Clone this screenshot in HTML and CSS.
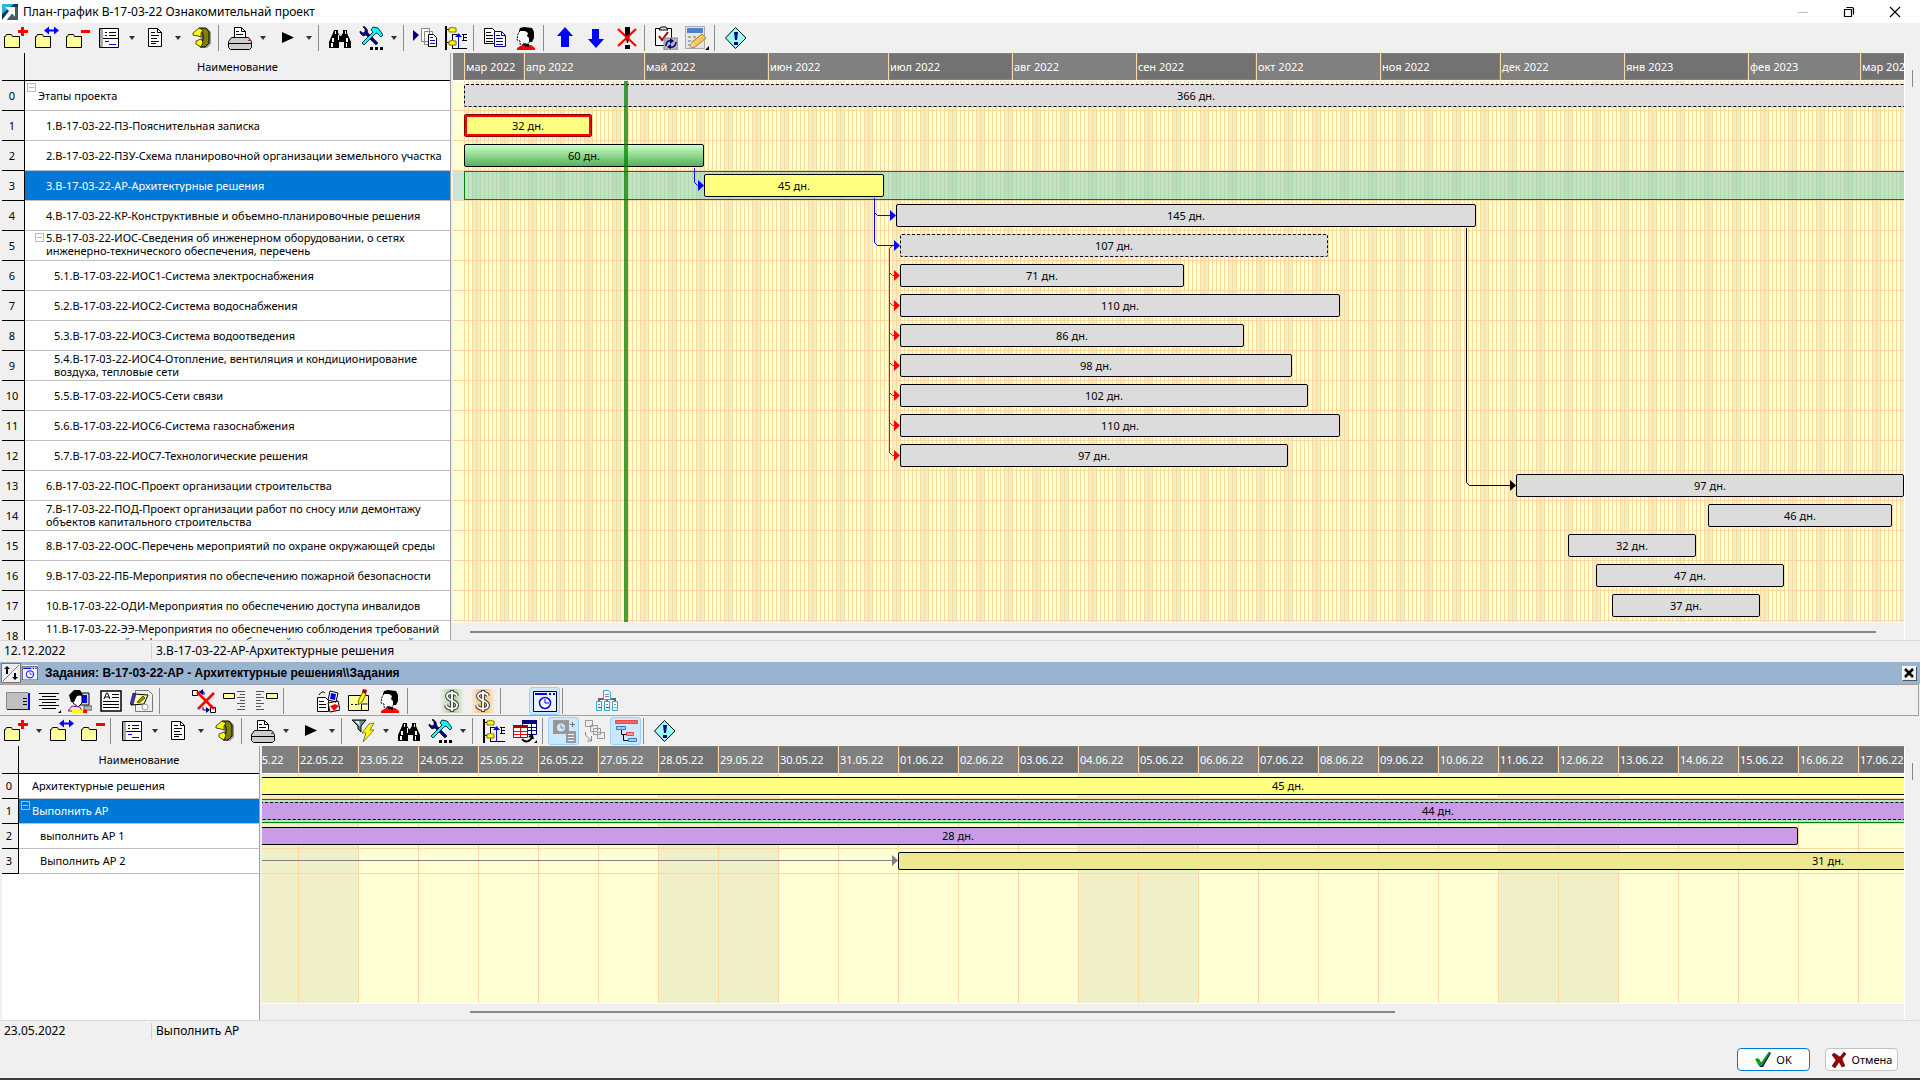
FILE: index.html
```html
<!DOCTYPE html>
<html lang="ru">
<head>
<meta charset="utf-8">
<meta name="viewport" content="width=device-width, initial-scale=1">
<title>План-график В-17-03-22 Ознакомительнай проект</title>
<link rel="stylesheet" href="styles.css">
</head>
<body>
<svg class="sprite" aria-hidden="true">
  <symbol id="i-folder" viewBox="0 0 24 24"><path d="M.5 10.500V21.500H15.500V10.500H8.500L7.500 8.500H2.500L1.500 10.500Z" fill="#ff9" stroke="#000"/></symbol>
  <symbol id="i-add" viewBox="0 0 24 24"><use href="#i-folder"/><path d="M14 4h3V1h3v3h4v3h-4v3h-3V7h-3z" fill="#f00"/></symbol>
  <symbol id="i-move" viewBox="0 0 24 24"><use href="#i-folder"/><path d="M9 4.500l5-4v3h5v-3l5 4-5 4v-3h-5v3z" fill="#00f"/></symbol>
  <symbol id="i-remove" viewBox="0 0 24 24"><use href="#i-folder"/><path d="M15 4h9v3h-9z" fill="#f00"/></symbol>
  <symbol id="i-list" viewBox="0 0 24 24"><path d="M2.500 2.500h19v19h-19z" fill="#fff" stroke="#000"/><path d="M3 3h3v18H3z" fill="#aaa"/><path d="M8 6h2v1H8zM12 6h7v1h-7zM8 9h2v1H8zM12 9h7v1h-7zM6 12h15v1H6z"/><path d="M8 15h4v1H8zM12 18h7v1h-7z" fill="#00f"/></symbol>
  <symbol id="i-doc" viewBox="0 0 24 24"><path d="M5.500 2.500h9l4 4v14h-13z" fill="#fff" stroke="#000"/><path d="M14.500 3v3.500h4M8 6.500h4M8 9.500h8M8 12.500h6M8 15.500h8M8 17.500h5" fill="none" stroke="#000"/></symbol>
  <symbol id="i-book" viewBox="0 0 24 24"><path d="M12 2h6l4 4v12l-4 4h-6z" fill="#999"/><path d="M10 2h7l3 4v11l-4 4h-5l3-7V8z" fill="#808000" stroke="#000"/><path d="M4 7l6-5 4 2-2 3v4l-3-1-5-1zM7 15l5-2 2 3-2 5-5-3z" fill="#ff0" stroke="#000" stroke-width=".7"/></symbol>
  <symbol id="i-print" viewBox="0 0 24 24"><path d="M6.500 12V1.500h7l4 4V12" fill="#fff" stroke="#000"/><path d="M13.500 2v3.500h4M8 5.500h3M8 8.500h7" fill="none" stroke="#000"/><path d="M3.500 11.500h17l3 4v6l-2 2h-19l-2-2v-6z" fill="#ccc" stroke="#000"/><path d="M1 17.500h22" stroke="#000"/><path d="M20 14h2v1h-2z" fill="#f00"/></symbol>
  <symbol id="i-play" viewBox="0 0 24 24"><path d="M8 6l12 5.500L8 17z"/></symbol>
  <symbol id="i-find" viewBox="0 0 24 24"><path d="M6 4h4v3l2 3h1l2-3V4h4v3l4 9v6h-7v-6h-5v6H1v-6l4-9z"/><path d="M7 5h1v3H7zM17 5h1v3h-1zM4 12h2v4H4zM18 12h2v4h-2zM3 17h2v4H3zM18 17h1v4h-1zM10 9h1v5h-1z" fill="#fff"/></symbol>
  <symbol id="i-tools" viewBox="0 0 24 24"><path d="M4 1l2 2v3L4 7 1 5v2l3 3 3-1 10 10 2-2L9 7 8 3 5 0z" fill="#000080" stroke="#000" stroke-width=".6"/><path d="M14 1l5 1 3 4 2 3-2 2-4-4-2 1L5 19l-2-2L14 6l-2-2z" fill="#0ff" stroke="#000" stroke-width=".8"/><path d="M11 21h3v3h-3zM16 21h3v3h-3zM21 21h3v3h-3z"/></symbol>
  <symbol id="i-expand" viewBox="0 0 24 24"><path d="M0 4l6 5-6 6z" fill="#000080"/><path d="M8.500 2.500h8v13h-8zM11.500 5.500h8v13h-8z" fill="#fff" stroke="#888"/><path d="M15.500 8.500h5l3 3v9h-8z" fill="#fff" stroke="#000"/><path d="M17 11.500h3M17 14.500h5M17 17.500h5" stroke="#00f"/></symbol>
  <symbol id="i-tree" viewBox="0 0 24 24"><path d="M2 0v24" stroke="#000" stroke-width="2"/><path d="M3 3.500h3M3 16.500h3M8 22.500h15M23 8.500h-5M19.500 8v6M23 11.500h-3M23 14.500h-5M8.500 8v7M8.500 22v-3M8 8.500h5" stroke="#000" fill="none"/><path d="M5 2h2l1-1 2 1h2v4H5zM5 15h2l1-1 2 1h2v4H5z" fill="#ff0" stroke="#770"/><path d="M14 22V11h-3l3.500-4L18 11h-3v11z" fill="#00f"/></symbol>
  <symbol id="i-copy" viewBox="0 0 24 24"><path d="M1.500 2.500h8l4 4v11h-12z" fill="#fff" stroke="#000"/><path d="M3 6.500h5M3 9.500h7M3 12.500h7M3 15.500h7" stroke="#000"/><path d="M11.500 5.500h7l4 4v11h-11z" fill="#fff" stroke="#000080"/><path d="M18.500 6v3.500h4M13 9.500h4M13 12.500h7M13 15.500h7M13 18.500h7" fill="none" stroke="#000080"/></symbol>
  <symbol id="i-person" viewBox="0 0 24 24"><path d="M7 3h7l4 4-2 8-3 5-7-2v-3l-3-1 1-6z" fill="#fff" stroke="#000" stroke-dasharray="2 1"/><path d="M6 2l4-1 8 1 2 4v6l-2 4h-3v-4l-2-2 1-3-3-2H5z"/><path d="M3 22l5-3h9l4 3v2H3z" fill="#f00"/><path d="M9 17l6 1v3l-5-1z"/></symbol>
  <symbol id="i-up" viewBox="0 0 24 24"><path d="M12 1l8 9h-4v11H8V10H4z" fill="#00f"/></symbol>
  <symbol id="i-down" viewBox="0 0 24 24"><path d="M12 22l-8-9h4V3h7v10h5z" fill="#00f"/></symbol>
  <symbol id="i-stop" viewBox="0 0 24 24"><path d="M10 1h5v8l-2 8h-1l-2-8zM10 19h5v4h-5z"/><path d="M3 3l18 17M21 3L3 20" stroke="#f00" stroke-width="2.200"/></symbol>
  <symbol id="i-check" viewBox="0 0 24 24"><path d="M1.500 2.500h16v17h-16z" fill="#fff" stroke="#000"/><path d="M5 4l2-3h5l2 3z" fill="#ddd" stroke="#000"/><path d="M5 10l3 4 6-8" fill="none" stroke="#a00000" stroke-width="2"/><path d="M10 12h14v12H10z" fill="#b4b4b4" stroke="#888"/><path d="M12 20c0-4 2-6 6-5M22 16c0 4-3 6-7 5" fill="none" stroke="#000080" stroke-width="1.500"/><path d="M16 12l4 3-4 3zM17 18v5l-4-2z" fill="#000080"/></symbol>
  <symbol id="i-calc" viewBox="0 0 24 24"><path d="M.5.5h19v22H.500z" fill="#e6e6e6" stroke="#aaa"/><path d="M2 2h16v5H2z" fill="#5080c8"/><path d="M3 10h3v2H3zM8 10h3v2H8zM13 10h3v2h-3zM3 14h3v2H3zM8 14h3v2H8zM3 18h3v2H3z" fill="#aaa"/><path d="M5 22l2-6L17 8l4 4-11 9z" fill="#f8c860" stroke="#b07820"/><path d="M5 22l2-6 3 4z" fill="#e8d8b8"/><path d="M24 20v4h-4z"/></symbol>
  <symbol id="i-info" viewBox="0 0 24 24"><path d="M11.500 1.500L22 12 11.500 22.500 1.500 12z" fill="#9ff" stroke="#000"/><path d="M10 6h4l-1 8h-2zM10 16h4v3h-4z" fill="#000080"/></symbol>
  <symbol id="i-panel" viewBox="0 0 24 24"><path d="M1 4h23v17H1z" fill="#00f"/><path d="M0 3h22v17H0z" fill="#c0c0c0"/><path d="M.5 20V3.500H22" fill="none" stroke="#888"/><path d="M17 9.500h4M17 12.500h4M17 15.500h4" stroke="#000"/></symbol>
  <symbol id="i-lines" viewBox="0 0 24 24"><path d="M2 4.500h20M5 7.500h14M2 10.500h20M5 13.500h14M2 16.500h20M5 19.500h14" stroke="#000"/><path d="M24 21v3h-3z"/></symbol>
  <symbol id="i-user" viewBox="0 0 24 24"><path d="M12 4h9v12h-9z" fill="#ddd" stroke="#000"/><path d="M14 6h5v8h-5z" fill="#00f"/><path d="M16 17h8v4h-8z" fill="#bbb" stroke="#555"/><path d="M5 6l5-2 4 3v7l-4 4-5-4z" fill="#fff" stroke="#000"/><path d="M1 6l5-5h6l3 5-6 1-3 6H3z"/><path d="M0 22l4-5 8 1 2 4z" fill="#e8e8e8" stroke="#909"/><path d="M4 21h12v3H4z" fill="#ff0"/><path d="M15 21h4v3h-4z" fill="#f00"/></symbol>
  <symbol id="i-article" viewBox="0 0 24 24"><path d="M2 2h20v20H2z" fill="#fff" stroke="#000" stroke-width="1.500"/><path d="M5 10l2.500-6h1L11 10M6 8h4M13 5.500h7M13 8.500h7M4 12.500h16M4 15.500h16M4 18.500h16" fill="none" stroke="#000"/></symbol>
  <symbol id="i-plan" viewBox="0 0 24 24"><path d="M5.500 1.500h13l4 4v17h-17z" fill="#eee" stroke="#777"/><path d="M4 5l14 1-4 9-13 1z" fill="#ff9" stroke="#000"/><path d="M3 4l3 1-3 11-3-1z" fill="#33c" stroke="#000" stroke-width=".5"/><circle cx="15" cy="18" r="3" fill="#fff" stroke="#999"/><path d="M7 13l6-6 2 2-6 5z" fill="#990" stroke="#550"/></symbol>
  <symbol id="i-unlink" viewBox="0 0 24 24"><path d="M.5 1.500h5v5h-5zM18.500 18.500h5v5h-5z" fill="#fff" stroke="#000"/><path d="M7 3h5v3M11 18v3h6" fill="none" stroke="#000080"/><path d="M11 0v6L7 3zM14 18v6l4-3z" fill="#000080"/><path d="M5 3l17 17M22 4L6 20" stroke="#f00" stroke-width="2.500"/></symbol>
  <symbol id="i-left" viewBox="0 0 24 24"><path d="M.5 4.500h11v5H.500z" fill="#ff9" stroke="#000"/><path d="M14 2.500h8M17 5.500h5M14 8.500h8M17 11.500h5M14 14.500h8M17 17.500h5M14 20.500h8" stroke="#555"/></symbol>
  <symbol id="i-right" viewBox="0 0 24 24"><path d="M12.500 4.500h11v5h-11z" fill="#ff9" stroke="#000"/><path d="M2 2.500h8M2 5.500h5M2 8.500h8M2 11.500h5M2 14.500h8M2 17.500h5M2 20.500h8" stroke="#555"/></symbol>
  <symbol id="i-cards" viewBox="0 0 24 24"><path d="M1.500 8.500h8l3 3v11h-11z" fill="#fff" stroke="#000"/><path d="M3 12.500h5M3 15.500h7M3 18.500h7M3 6q3-5 6-2" fill="none" stroke="#000"/><path d="M14 2l8 2-2 9-8-2zM12 14l10-2 2 9-10 2z" fill="#fff" stroke="#000"/><path d="M15 4l5 1-1 6-5-1z" fill="#00f"/><path d="M14 17l3-1 2-1 4 2-5 5z" fill="#f00"/></symbol>
  <symbol id="i-note" viewBox="0 0 24 24"><path d="M1.500 6.500h20v15h-20z" fill="#ff9" stroke="#000"/><path d="M4 15h2v1H4zM8 15h2v1H8z"/><path d="M14.500 21v-6h6" fill="#fff" stroke="#000"/><path d="M11 16l1-6 4-7 3 2-4 8z" fill="#ff0" stroke="#660"/><path d="M15 3l1-3 4 1-1 4z" fill="#a00"/></symbol>
  <symbol id="i-dollar" viewBox="0 0 24 24"><path d="M17 7c-1-4-10-4-10 0 0 5 10 4 10 9 0 5-10 5-11 0M12 1v22" fill="none" stroke="#444" stroke-width="4"/><path d="M17 7c-1-4-10-4-10 0 0 5 10 4 10 9 0 5-10 5-11 0M12 2v20" fill="none" stroke="#fff" stroke-width="1.800"/></symbol>
  <symbol id="i-clock" viewBox="0 0 24 24"><path d="M.5 2.500h23v20H.500z" fill="#e8f4ff" stroke="#000"/><path d="M2 4h12v2H2zM16 4h2v2h-2zM20 4h2v2h-2z" fill="#00f"/><circle cx="12" cy="14" r="5.500" fill="#fff" stroke="#00f" stroke-width="1.500"/><path d="M12 10v4h4" fill="none" stroke="#00f"/></symbol>
  <symbol id="i-org" viewBox="0 0 24 24"><path d="M12 9v4M4 13v-3h16v3" fill="none" stroke="#666" stroke-width="2"/><path d="M8.500 1.500h5l2 2v7h-7zM1.500 12.500h5v9h-5zM9.500 12.500h5v9h-5zM17.500 12.500h5v9h-5z" fill="#f4fbff" stroke="#29abd8"/><path d="M10 5.500h4M10 7.500h4M3 15.500h2M11 15.500h2M19 15.500h2" stroke="#88a"/><path d="M3 18h3v1H3z" fill="#f00"/><path d="M11 18h3v1h-3z" fill="#080"/><path d="M19 18h3v1h-3z" fill="#f90"/></symbol>
  <symbol id="i-filter" viewBox="0 0 24 24"><path d="M1 1h14l-5 6v6l-3-3V7z" fill="#5f8f8f" stroke="#000"/><path d="M4 2h4l1 5z" fill="#fff"/><path d="M18 5l5-1-4 7h4L12 23l3-9h-4z" fill="#ff0" stroke="#776"/></symbol>
  <symbol id="i-tables" viewBox="0 0 24 24"><path d="M9.500 1.500h14v14h-14z" fill="#fff" stroke="#000080"/><path d="M9 1h15v4H9z" fill="#000080"/><path d="M10 8.500h13M10 11.500h13M18.500 5v10" stroke="#000080"/><path d="M.5 6.500h14v12h-14z" fill="#fff" stroke="#a00"/><path d="M0 6h15v3H0z" fill="#a00"/><path d="M1 12.500h13M1 15.500h13M7.500 9v9" stroke="#f00"/><path d="M9 20c3 4 8 3 10-2M16 18l3-2 1 4" fill="none" stroke="#000" stroke-width="2"/><path d="M24 21v3h-3z"/></symbol>
  <symbol id="i-photo" viewBox="0 0 24 24"><path d="M1 1h16v14H1zM14 12h10v12H14z" fill="#999"/><circle cx="9" cy="8.500" r="4" fill="#cce8ff"/><path d="M9 6v3h3M3 3h3" fill="none" stroke="#888"/><path d="M16 15.500h6M16 18.500h6M16 21.500h6" stroke="#e8f4ff"/><path d="M18 5.500h5M20.500 3v5" stroke="#777"/></symbol>
  <symbol id="i-boxes" viewBox="0 0 24 24"><path d="M2.500 1.500h7v6h-7zM7.500 6.500h7v6h-7zM10.500 9.500h7v6h-7zM14.500 13.500h7v6h-7z" fill="#eee" stroke="#999"/><path d="M2.500 13v3l6 6m0-5v5H4" fill="none" stroke="#888"/></symbol>
  <symbol id="i-gantt" viewBox="0 0 24 24"><path d="M1.500 1.500h22v3h-22z" fill="#f66" stroke="#e44"/><path d="M2.500 7.500h9v3h-9z" fill="#9cf" stroke="#47b"/><path d="M12.500 13.500h7v3h-7z" fill="#f99" stroke="#e44"/><path d="M14.500 19.500h8v3h-8z" fill="#9cf" stroke="#47b"/><path d="M7.500 11v4.500H12M9.500 16v5.500H14" fill="none" stroke="#000"/></symbol>
</svg>

<header class="titlebar">
  <svg class="logo" viewBox="0 0 16 16" aria-hidden="true"><path d="M0 0h16v16H0z" fill="#135"/><path d="M0 0h12L0 10z" fill="#27b4e8"/><path d="M3 3h10v10l-3-3-5 6H0l7-9z" fill="#fff"/><path d="M13 3v10l-3-3-5 6h11V3z" fill="#445a66"/></svg>
  <h1 class="title">План-график В-17-03-22 Ознакомительнай проект</h1>
  <button class="win" aria-label="Свернуть"><svg viewBox="0 0 12 12"><path d="M1 6.500h10" stroke="#bbb"/></svg></button>
  <button class="win" aria-label="Восстановить"><svg viewBox="0 0 12 12"><path d="M1.500 3.500h7v7h-7zM3.500 1.500h6l1 1v6" fill="none" stroke="#000" stroke-width="1.200"/></svg></button>
  <button class="win" aria-label="Закрыть"><svg viewBox="0 0 12 12"><path d="M1 1l10 10M11 1L1 11" stroke="#000" stroke-width="1.200"/></svg></button>
</header>

<nav class="toolbar" aria-label="Этапы">
  <button class="tool" aria-label="Добавить"><svg><use href="#i-add"/></svg></button>
  <button class="tool" aria-label="Переместить"><svg><use href="#i-move"/></svg></button>
  <button class="tool" aria-label="Удалить"><svg><use href="#i-remove"/></svg></button>
  <button class="tool" aria-label="Вид"><svg><use href="#i-list"/></svg></button>
  <button class="drop" aria-label="Варианты вида"></button>
  <button class="tool" aria-label="Документ"><svg><use href="#i-doc"/></svg></button>
  <button class="drop" aria-label="Варианты документа"></button>
  <button class="tool" aria-label="Справочник"><svg><use href="#i-book"/></svg></button>
  <span class="sep"></span>
  <button class="tool" aria-label="Печать"><svg><use href="#i-print"/></svg></button>
  <button class="drop" aria-label="Варианты печати"></button>
  <button class="tool" aria-label="Запуск"><svg><use href="#i-play"/></svg></button>
  <button class="drop" aria-label="Варианты запуска"></button>
  <span class="sep"></span>
  <button class="tool" aria-label="Поиск"><svg><use href="#i-find"/></svg></button>
  <button class="tool" aria-label="Сервис"><svg><use href="#i-tools"/></svg></button>
  <button class="drop" aria-label="Варианты сервиса"></button>
  <span class="sep"></span>
  <button class="tool" aria-label="Развернуть"><svg><use href="#i-expand"/></svg></button>
  <button class="tool" aria-label="Дерево"><svg><use href="#i-tree"/></svg></button>
  <span class="sep"></span>
  <button class="tool" aria-label="Копировать"><svg><use href="#i-copy"/></svg></button>
  <button class="tool" aria-label="Исполнитель"><svg><use href="#i-person"/></svg></button>
  <span class="sep"></span>
  <button class="tool" aria-label="Вверх"><svg><use href="#i-up"/></svg></button>
  <button class="tool" aria-label="Вниз"><svg><use href="#i-down"/></svg></button>
  <button class="tool" aria-label="Снять важность"><svg><use href="#i-stop"/></svg></button>
  <span class="sep"></span>
  <button class="tool" aria-label="Обновить задания"><svg><use href="#i-check"/></svg></button>
  <button class="tool" aria-label="Расчёт"><svg><use href="#i-calc"/></svg></button>
  <span class="sep"></span>
  <button class="tool" aria-label="Информация"><svg><use href="#i-info"/></svg></button>
</nav>

<main class="gantt stages">
  <div class="names">
    <table>
      <thead><tr><th class="num" aria-label="Номер"></th><th>Наименование</th></tr></thead>
      <tbody>
        <tr><th>0</th><td><button class="toggle" aria-label="Свернуть ветвь"></button><div class="name">Этапы проекта</div></td></tr>
        <tr><th>1</th><td class="l1"><div class="name">1.В-17-03-22-ПЗ-Пояснительная записка</div></td></tr>
        <tr><th>2</th><td class="l1"><div class="name">2.В-17-03-22-ПЗУ-Схема планировочной организации земельного участка</div></td></tr>
        <tr class="current"><th>3</th><td class="l1"><div class="name">3.В-17-03-22-АР-Архитектурные решения</div></td></tr>
        <tr><th>4</th><td class="l1"><div class="name">4.В-17-03-22-КР-Конструктивные и объемно-планировочные решения</div></td></tr>
        <tr><th>5</th><td class="l1"><button class="toggle" aria-label="Свернуть ветвь"></button><div class="name">5.В-17-03-22-ИОС-Сведения об инженерном оборудовании, о сетях<br>инженерно-технического обеспечения, перечень<br>инженерно-технических мероприятий</div></td></tr>
        <tr><th>6</th><td class="l2"><div class="name">5.1.В-17-03-22-ИОС1-Система электроснабжения</div></td></tr>
        <tr><th>7</th><td class="l2"><div class="name">5.2.В-17-03-22-ИОС2-Система водоснабжения</div></td></tr>
        <tr><th>8</th><td class="l2"><div class="name">5.3.В-17-03-22-ИОС3-Система водоотведения</div></td></tr>
        <tr><th>9</th><td class="l2"><div class="name">5.4.В-17-03-22-ИОС4-Отопление, вентиляция и кондиционирование<br>воздуха, тепловые сети</div></td></tr>
        <tr><th>10</th><td class="l2"><div class="name">5.5.В-17-03-22-ИОС5-Сети связи</div></td></tr>
        <tr><th>11</th><td class="l2"><div class="name">5.6.В-17-03-22-ИОС6-Система газоснабжения</div></td></tr>
        <tr><th>12</th><td class="l2"><div class="name">5.7.В-17-03-22-ИОС7-Технологические решения</div></td></tr>
        <tr><th>13</th><td class="l1"><div class="name">6.В-17-03-22-ПОС-Проект организации строительства</div></td></tr>
        <tr><th>14</th><td class="l1"><div class="name">7.В-17-03-22-ПОД-Проект организации работ по сносу или демонтажу<br>объектов капитального строительства</div></td></tr>
        <tr><th>15</th><td class="l1"><div class="name">8.В-17-03-22-ООС-Перечень мероприятий по охране окружающей среды</div></td></tr>
        <tr><th>16</th><td class="l1"><div class="name">9.В-17-03-22-ПБ-Мероприятия по обеспечению пожарной безопасности</div></td></tr>
        <tr><th>17</th><td class="l1"><div class="name">10.В-17-03-22-ОДИ-Мероприятия по обеспечению доступа инвалидов</div></td></tr>
        <tr><th>18</th><td class="l1"><div class="name">11.В-17-03-22-ЭЭ-Мероприятия по обеспечению соблюдения требований<br>энергетической эффективности и требований оснащенности зданий</div></td></tr>
      </tbody>
    </table>
  </div>
  <div class="chart">
    <div class="scale">
      <span style="--days:15">мар 2022</span>
      <span style="--days:30">апр 2022</span>
      <span style="--days:31">май 2022</span>
      <span style="--days:30">июн 2022</span>
      <span style="--days:31">июл 2022</span>
      <span style="--days:31">авг 2022</span>
      <span style="--days:30">сен 2022</span>
      <span style="--days:31">окт 2022</span>
      <span style="--days:30">ноя 2022</span>
      <span style="--days:31">дек 2022</span>
      <span style="--days:31">янв 2023</span>
      <span style="--days:28">фев 2023</span>
      <span style="--days:31">мар 2023</span>
    </div>
    <div class="plot">
      <div class="row"><div class="bar group" style="--start:0;--days:366">366 дн.</div></div>
      <div class="row"><div class="bar late" style="--start:0;--days:32">32 дн.</div></div>
      <div class="row"><div class="bar done" style="--start:0;--days:60">60 дн.</div></div>
      <div class="row current"><div class="bar active" style="--start:60;--days:45">45 дн.</div></div>
      <div class="row"><div class="bar" style="--start:108;--days:145">145 дн.</div></div>
      <div class="row"><div class="bar group" style="--start:109;--days:107">107 дн.</div></div>
      <div class="row"><div class="bar" style="--start:109;--days:71">71 дн.</div></div>
      <div class="row"><div class="bar" style="--start:109;--days:110">110 дн.</div></div>
      <div class="row"><div class="bar" style="--start:109;--days:86">86 дн.</div></div>
      <div class="row"><div class="bar" style="--start:109;--days:98">98 дн.</div></div>
      <div class="row"><div class="bar" style="--start:109;--days:102">102 дн.</div></div>
      <div class="row"><div class="bar" style="--start:109;--days:110">110 дн.</div></div>
      <div class="row"><div class="bar" style="--start:109;--days:97">97 дн.</div></div>
      <div class="row"><div class="bar" style="--start:263;--days:97">97 дн.</div></div>
      <div class="row"><div class="bar" style="--start:311;--days:46">46 дн.</div></div>
      <div class="row"><div class="bar" style="--start:276;--days:32">32 дн.</div></div>
      <div class="row"><div class="bar" style="--start:283;--days:47">47 дн.</div></div>
      <div class="row"><div class="bar" style="--start:287;--days:37">37 дн.</div></div>
      <svg class="links" aria-hidden="true">
        <g fill="none">
          <path stroke="#f00" d="M441 164.500h-1.500l-3 3V371.500l3 3H441M436.500 191.500l3 3H441M436.500 221.500l3 3H441M436.500 251.500l3 3H441M436.500 281.500l3 3H441M436.500 311.500l3 3H441M436.500 341.500l3 3H441"/>
          <path stroke="#00f" d="M241.500 87V101.500l3 3M421.500 117V161.500l3 3H441M421.500 131.500l3 3H437"/>
          <path stroke="#000" d="M1013.500 147V401.500l3 3H1057"/>
        </g>
        <path fill="#f00" d="M441 189l6 5.500-6 5.500zM441 219l6 5.500-6 5.500zM441 249l6 5.500-6 5.500zM441 279l6 5.500-6 5.500zM441 309l6 5.500-6 5.500zM441 339l6 5.500-6 5.500zM441 369l6 5.500-6 5.500z"/>
        <path fill="#00f" d="M245 99l6 5.500-6 5.500zM437 129l6 5.500-6 5.500zM441 159l6 5.500-6 5.500z"/>
        <path d="M1057 399l6 5.500-6 5.500z"/>
      </svg>
      <div class="today"></div>
    </div>
    <div class="hscroll"><div class="thumb"></div></div>
  </div>
  <div class="vscroll"><div class="thumb"></div></div>
</main>
<div class="status"><span class="date">12.12.2022</span><span>3.В-17-03-22-АР-Архитектурные решения</span></div>

<section class="dock">
  <header class="dockbar">
    <button class="swap" aria-label="Поменять местами"><svg viewBox="0 0 18 18"><path d="M1 17L17 1" stroke="#777"/><path d="M5 2L2 5h2v5h2V5h2zM13 16l-3-3h2V9h2v4h2z"/></svg></button>
    <svg class="dockicon" viewBox="0 0 24 24"><use href="#i-clock"/></svg>
    <h2>Задания: В-17-03-22-АР - Архитектурные решения\\Задания</h2>
    <button class="shut" aria-label="Закрыть панель"><svg viewBox="0 0 12 12"><path d="M2 2l8 8M10 2l-8 8" stroke="#000" stroke-width="2.500"/></svg></button>
  </header>
  <nav class="toolbar framed" aria-label="Задания">
    <button class="tool" aria-label="Карточка"><svg><use href="#i-panel"/></svg></button>
    <button class="tool" aria-label="Строки"><svg><use href="#i-lines"/></svg></button>
    <button class="tool" aria-label="Сотрудник"><svg><use href="#i-user"/></svg></button>
    <button class="tool" aria-label="Описание"><svg><use href="#i-article"/></svg></button>
    <button class="tool" aria-label="Чертёж"><svg><use href="#i-plan"/></svg></button>
    <span class="sep far"></span>
    <button class="tool" aria-label="Убрать связь"><svg><use href="#i-unlink"/></svg></button>
    <button class="tool" aria-label="Влево"><svg><use href="#i-left"/></svg></button>
    <button class="tool" aria-label="Вправо"><svg><use href="#i-right"/></svg></button>
    <span class="sep far"></span>
    <button class="tool" aria-label="Карты"><svg><use href="#i-cards"/></svg></button>
    <button class="tool" aria-label="Заметка"><svg><use href="#i-note"/></svg></button>
    <button class="tool" aria-label="Исполнитель"><svg><use href="#i-person"/></svg></button>
    <span class="sep far"></span>
    <button class="tool" aria-label="Доход"><svg class="green"><use href="#i-dollar"/></svg></button>
    <button class="tool" aria-label="Расход"><svg class="orange"><use href="#i-dollar"/></svg></button>
    <span class="sep far"></span>
    <button class="tool on" aria-label="График"><svg><use href="#i-clock"/></svg></button>
    <span class="sep far"></span>
    <button class="tool" aria-label="Структура"><svg><use href="#i-org"/></svg></button>
  </nav>
  <nav class="toolbar" aria-label="График заданий">
    <button class="tool" aria-label="Добавить"><svg><use href="#i-add"/></svg></button>
    <button class="drop" aria-label="Варианты добавления"></button>
    <button class="tool" aria-label="Переместить"><svg><use href="#i-move"/></svg></button>
    <button class="tool" aria-label="Удалить"><svg><use href="#i-remove"/></svg></button>
    <span class="sep"></span>
    <button class="tool" aria-label="Вид"><svg><use href="#i-list"/></svg></button>
    <button class="drop" aria-label="Варианты вида"></button>
    <button class="tool" aria-label="Документ"><svg><use href="#i-doc"/></svg></button>
    <button class="drop" aria-label="Варианты документа"></button>
    <button class="tool" aria-label="Справочник"><svg><use href="#i-book"/></svg></button>
    <span class="sep"></span>
    <button class="tool" aria-label="Печать"><svg><use href="#i-print"/></svg></button>
    <button class="drop" aria-label="Варианты печати"></button>
    <button class="tool" aria-label="Запуск"><svg><use href="#i-play"/></svg></button>
    <button class="drop" aria-label="Варианты запуска"></button>
    <span class="sep"></span>
    <button class="tool" aria-label="Фильтр"><svg><use href="#i-filter"/></svg></button>
    <button class="drop" aria-label="Варианты фильтра"></button>
    <button class="tool" aria-label="Поиск"><svg><use href="#i-find"/></svg></button>
    <button class="tool" aria-label="Сервис"><svg><use href="#i-tools"/></svg></button>
    <button class="drop" aria-label="Варианты сервиса"></button>
    <span class="sep"></span>
    <button class="tool" aria-label="Дерево"><svg><use href="#i-tree"/></svg></button>
    <button class="tool" aria-label="Таблицы"><svg><use href="#i-tables"/></svg></button>
    <span class="sep"></span>
    <button class="tool on" aria-label="Подробности"><svg><use href="#i-photo"/></svg></button>
    <button class="tool" aria-label="Каскад"><svg><use href="#i-boxes"/></svg></button>
    <button class="tool on" aria-label="Диаграмма"><svg><use href="#i-gantt"/></svg></button>
    <span class="sep"></span>
    <button class="tool" aria-label="Информация"><svg><use href="#i-info"/></svg></button>
  </nav>
</section>

<section class="gantt tasks">
  <div class="names">
    <table>
      <thead><tr><th class="num" aria-label="Номер"></th><th>Наименование</th></tr></thead>
      <tbody>
        <tr><th>0</th><td><div class="name">Архитектурные решения</div></td></tr>
        <tr class="current"><th>1</th><td><button class="toggle" aria-label="Свернуть ветвь"></button><div class="name">Выполнить АР</div></td></tr>
        <tr><th>2</th><td class="l1"><div class="name">выполнить АР 1</div></td></tr>
        <tr><th>3</th><td class="l1"><div class="name">Выполнить АР 2</div></td></tr>
      </tbody>
    </table>
  </div>
  <div class="chart">
    <div class="scale">
      <span>21.05.22</span><span>22.05.22</span><span>23.05.22</span><span>24.05.22</span><span>25.05.22</span><span>26.05.22</span><span>27.05.22</span><span>28.05.22</span><span>29.05.22</span><span>30.05.22</span><span>31.05.22</span><span>01.06.22</span><span>02.06.22</span><span>03.06.22</span><span>04.06.22</span><span>05.06.22</span><span>06.06.22</span><span>07.06.22</span><span>08.06.22</span><span>09.06.22</span><span>10.06.22</span><span>11.06.22</span><span>12.06.22</span><span>13.06.22</span><span>14.06.22</span><span>15.06.22</span><span>16.06.22</span><span>17.06.22</span>
    </div>
    <div class="plot">
      <div class="row"><div class="bar active" style="--start:-6;--days:45">45 дн.</div></div>
      <div class="row current"><div class="bar work group" style="--start:-3;--days:44">44 дн.</div></div>
      <div class="row"><div class="bar work" style="--start:-3;--days:28">28 дн.</div></div>
      <div class="row"><div class="bar wait" style="--start:10;--days:31">31 дн.</div></div>
      <svg class="links" aria-hidden="true"><path d="M0 86.500h631" stroke="#808080"/><path d="M630 81l6 5.500-6 5.500z" fill="#808080"/></svg>
    </div>
    <div class="hscroll"><div class="thumb"></div></div>
  </div>
  <div class="vscroll"><div class="thumb"></div></div>
</section>
<div class="status"><span class="date">23.05.2022</span><span>Выполнить АР</span></div>

<footer class="actions">
  <button class="action primary"><svg viewBox="0 0 16 16" aria-hidden="true"><path d="M1 8l3-1 2 4 8-11 2 1-8 14H5z" fill="#006"/><path d="M0 7l3-1 3 5 8-11 1 1-8 13H4z" fill="#0a0"/></svg>OK</button>
  <button class="action"><svg viewBox="0 0 16 16" aria-hidden="true"><path d="M3 1l6 4 4-5 2 2-4 5 3 7-3 1-3-5-4 6-3-2 4-6-4-5z" fill="#900" stroke="#300" stroke-width=".5"/></svg>Отмена</button>
</footer>
</body>
</html>
```
FILE: styles.css
```css
* { box-sizing: border-box; }

body {
  margin: 0;
  min-height: 100vh;
  display: flex;
  flex-direction: column;
  background: #f0f0f0;
  border-bottom: 2px solid #3c3c3c;
  color: #000;
  font: 11px/13px "Noto Sans", "Open Sans", sans-serif;
}

button {
  margin: 0;
  padding: 0;
  border: 0;
  background: none;
  font: inherit;
  color: inherit;
}

h1, h2 { margin: 0; font-weight: 400; }

.sprite { display: block; width: 0; height: 0; }

/* window title */
.titlebar {
  display: flex;
  align-items: center;
  height: 23px;
  padding: 0 2px;
  background: #fff;
}
.logo { width: 16px; height: 16px; }
.title { flex: 1; padding-left: 5px; font-size: 12px; line-height: 16px; }
.win { width: 46px; height: 23px; display: grid; place-items: center; }
.win svg { width: 12px; height: 12px; }

/* toolbars */
.toolbar { display: flex; align-items: center; height: 30px; }
.tool {
  width: 31px;
  height: 28px;
  display: grid;
  place-items: center;
  border: 1px solid transparent;
  border-radius: 3px;
}
.tool svg { width: 24px; height: 24px; display: block; }
.tool.on { background: #cce8ff; border-color: #99d1ff; }
.tool .green { background: linear-gradient(90deg, #f0f0f0, #b4d49c 40%, #b4d49c 60%, #f0f0f0); }
.tool .orange { background: linear-gradient(90deg, #f0f0f0, #ffc470 40%, #ffc470 60%, #f0f0f0); }
.drop { width: 15px; height: 28px; display: grid; place-items: center; }
.drop::before { content: ""; border: 3px solid transparent; border-top: 4px solid #333; border-bottom: 0; }
.sep { width: 8px; height: 26px; }
.sep::before { content: ""; display: block; width: 1px; height: 26px; margin-left: 2px; background: #8c8c8c; }
.sep.far { margin-right: 23px; }
.framed {
  height: 32px;
  margin-right: 1px;
  padding: 2px 0 0 2px;
  border: solid #a0a0a0;
  border-width: 1px 1px 1px 0;
}

/* gantt panes */
.gantt { display: flex; min-height: 0; padding-left: 2px; overflow: hidden; }
.stages { flex: 587 1 0; --day: 4px; --row: 30px; --origin: 11px; --bar: 23px; }
.tasks { flex: 274 1 0; --day: 60px; --row: 25px; --origin: 36px; --bar: 18px; }

.names { flex: none; height: 100%; overflow: hidden; background: #fff; border-right: 1px solid #a0a0a0; contain: size; }
.stages .names { width: 449px; }
.tasks .names { width: 258px; }
.names table { width: 100%; table-layout: fixed; border-collapse: separate; border-spacing: 0; }
.names th, .names td { padding: 0 0 1px; font-weight: 400; }
.names th { background: #f0f0f0; border-bottom: 1px solid #000; }
.names thead th { height: 28px; }
.names .num, .names tbody th { border-right: 1px solid #000; }
.stages .num { width: 23px; }
.tasks .num { width: 17px; }
.names tbody th { padding-right: 2px; }
.names tbody th, .names td { height: var(--row); }
.names td { position: relative; border-bottom: 1px solid #c0c0c0; --indent: 13px; padding-left: var(--indent); white-space: nowrap; }
.names td.l1 { --indent: 21px; }
.names td.l2 { --indent: 29px; }
.name { max-height: 28px; overflow: hidden; }
.names .current td { background: #0078d7; color: #fff; }
.toggle {
  position: absolute;
  top: 2px;
  left: calc(var(--indent) - 11px);
  width: 9px;
  height: 9px;
  border: 1px solid #bbb;
  background: linear-gradient(#bbb, #bbb) center / 5px 1px no-repeat;
}

.chart { flex: 1; min-width: 0; display: flex; flex-direction: column; margin-left: 2px; }
.scale {
  display: flex;
  flex: none;
  height: 28px;
  overflow: hidden;
  border-bottom: 1px solid #fff;
  background: #808080;
  color: #fff;
  line-height: 27px;
  white-space: nowrap;
}
.scale span {
  flex: none;
  width: calc(var(--days, 1) * var(--day));
  border-left: 1px solid #fad8a0;
  padding-left: 1px;
}
.stages .scale { padding-left: var(--origin); }
.tasks .scale span:first-child { margin-left: -24px; }
.stages .scale span:nth-child(odd), .tasks .scale span:nth-child(even) { background: #727272; box-shadow: inset 0 0 0 1px #808080; }

.plot { position: relative; flex: 1; min-height: 0; overflow: hidden; contain: size; background-color: #ffffd4; }
.stages .plot {
  background-image:
    linear-gradient(#ffffd4, #ffffd4),
    repeating-linear-gradient(90deg, #fad8a0 0 1px, transparent 1px 4px),
    repeating-linear-gradient(90deg, transparent 0 8px, #f0f0c8 8px 16px, transparent 16px 28px);
  background-position: 0 0, 11px 0, 11px 0;
  background-size: 11px 100%, 100% 100%, 100% 100%;
  background-repeat: no-repeat;
}
.tasks .plot {
  background-image:
    linear-gradient(90deg, #fad8a0 1px, transparent 1px),
    linear-gradient(90deg, #f0f0c8 120px, transparent 120px);
  background-position: 36px 0, -24px 0;
  background-size: 60px 100%, 420px 100%;
}
.row {
  height: var(--row);
  padding: 3px 0 0 var(--origin);
  border-bottom: 1px solid #fad8a0;
  background-clip: padding-box;
}
.row.current { position: relative; background-color: rgba(0, 120, 215, .2); }
.row.current::before {
  content: "";
  position: absolute;
  inset: 0 0 0 var(--origin);
  border: solid #008000;
  border-width: 1px 0 1px 1px;
  background: rgba(165, 235, 175, .4);
}
.tasks .row.current { background-color: transparent; }
.tasks .row.current::before { left: 0; border-left: 0; background: #b9e4c3; }
.bar {
  position: relative;
  width: calc(var(--days) * var(--day));
  height: var(--bar);
  margin-left: calc(var(--start) * var(--day));
  border: 1px solid #000;
  border-radius: 2px;
  background: #dcdcdc;
  line-height: calc(var(--bar) - 1px);
  text-align: center;
  white-space: nowrap;
}
.tasks .bar { line-height: 16px; }
.bar.group { border-style: dashed; }
.bar.active { background: #ffff80; }
.bar.late { background: #ffff80; border-color: #8b0000; box-shadow: inset 0 0 0 2px #f00; }
.bar.done { background: linear-gradient(#c8ffc8, #58b058); }
.bar.work { background: #c89de6; }
.bar.wait { background: #eee890; }
.links { position: absolute; inset: 0; width: 100%; height: 100%; }
.today { position: absolute; top: 0; bottom: 0; left: 171px; width: 4px; background: rgba(0, 128, 0, .73); }

.hscroll { flex: none; height: 17px; border-top: 1px solid #fff; padding-top: 7px; }
.hscroll .thumb { height: 2px; background: #868686; }
.stages .hscroll .thumb { margin: 0 28px 0 17px; }
.tasks .hscroll .thumb { margin: 0 31% 0 208px; }
.stages .hscroll { height: 18px; padding-top: 8px; }
.vscroll { flex: none; width: 16px; border-left: 1px solid #fff; padding: 17px 7px 0; }
.vscroll .thumb { width: 1px; height: 17px; background: #868686; }

/* status lines */
.status { display: flex; align-items: center; height: 22px; padding: 0 0 2px 4px; border-top: 1px solid #d8d8d8; font-size: 12px; line-height: 16px; }
.status .date { width: 148px; margin-right: 4px; border-right: 1px solid #d0d0d0; }

/* docked panel */
.dockbar { display: flex; align-items: center; height: 22px; padding: 0 3px 0 1px; background: #99b4d1; }
.dockbar h2 { flex: 1; padding-left: 7px; font: 700 12px/16px "Liberation Sans", Arial, sans-serif; }
.swap { width: 20px; height: 20px; border: 1px solid #777; background: #f0f0f0; }
.swap svg { display: block; width: 18px; height: 18px; }
.dockicon { width: 16px; height: 16px; margin-left: 1px; background: #fff; }
.shut { width: 15px; height: 15px; border: 1px solid; border-color: #fff #555 #555 #fff; background: #f0f0f0; }
.shut svg { display: block; width: 12px; height: 12px; }

/* dialog buttons */
.actions { display: flex; justify-content: flex-end; gap: 15px; height: 36px; padding: 6px 22px 0 0; }
.action {
  display: flex;
  align-items: center;
  justify-content: center;
  gap: 5px;
  width: 73px;
  height: 23px;
  border: 1px solid #c4c4c4;
  border-radius: 4px;
  background: #fdfdfd;
}
.action svg { width: 16px; height: 16px; }
.action.primary { border-color: #0078d7; }
```
